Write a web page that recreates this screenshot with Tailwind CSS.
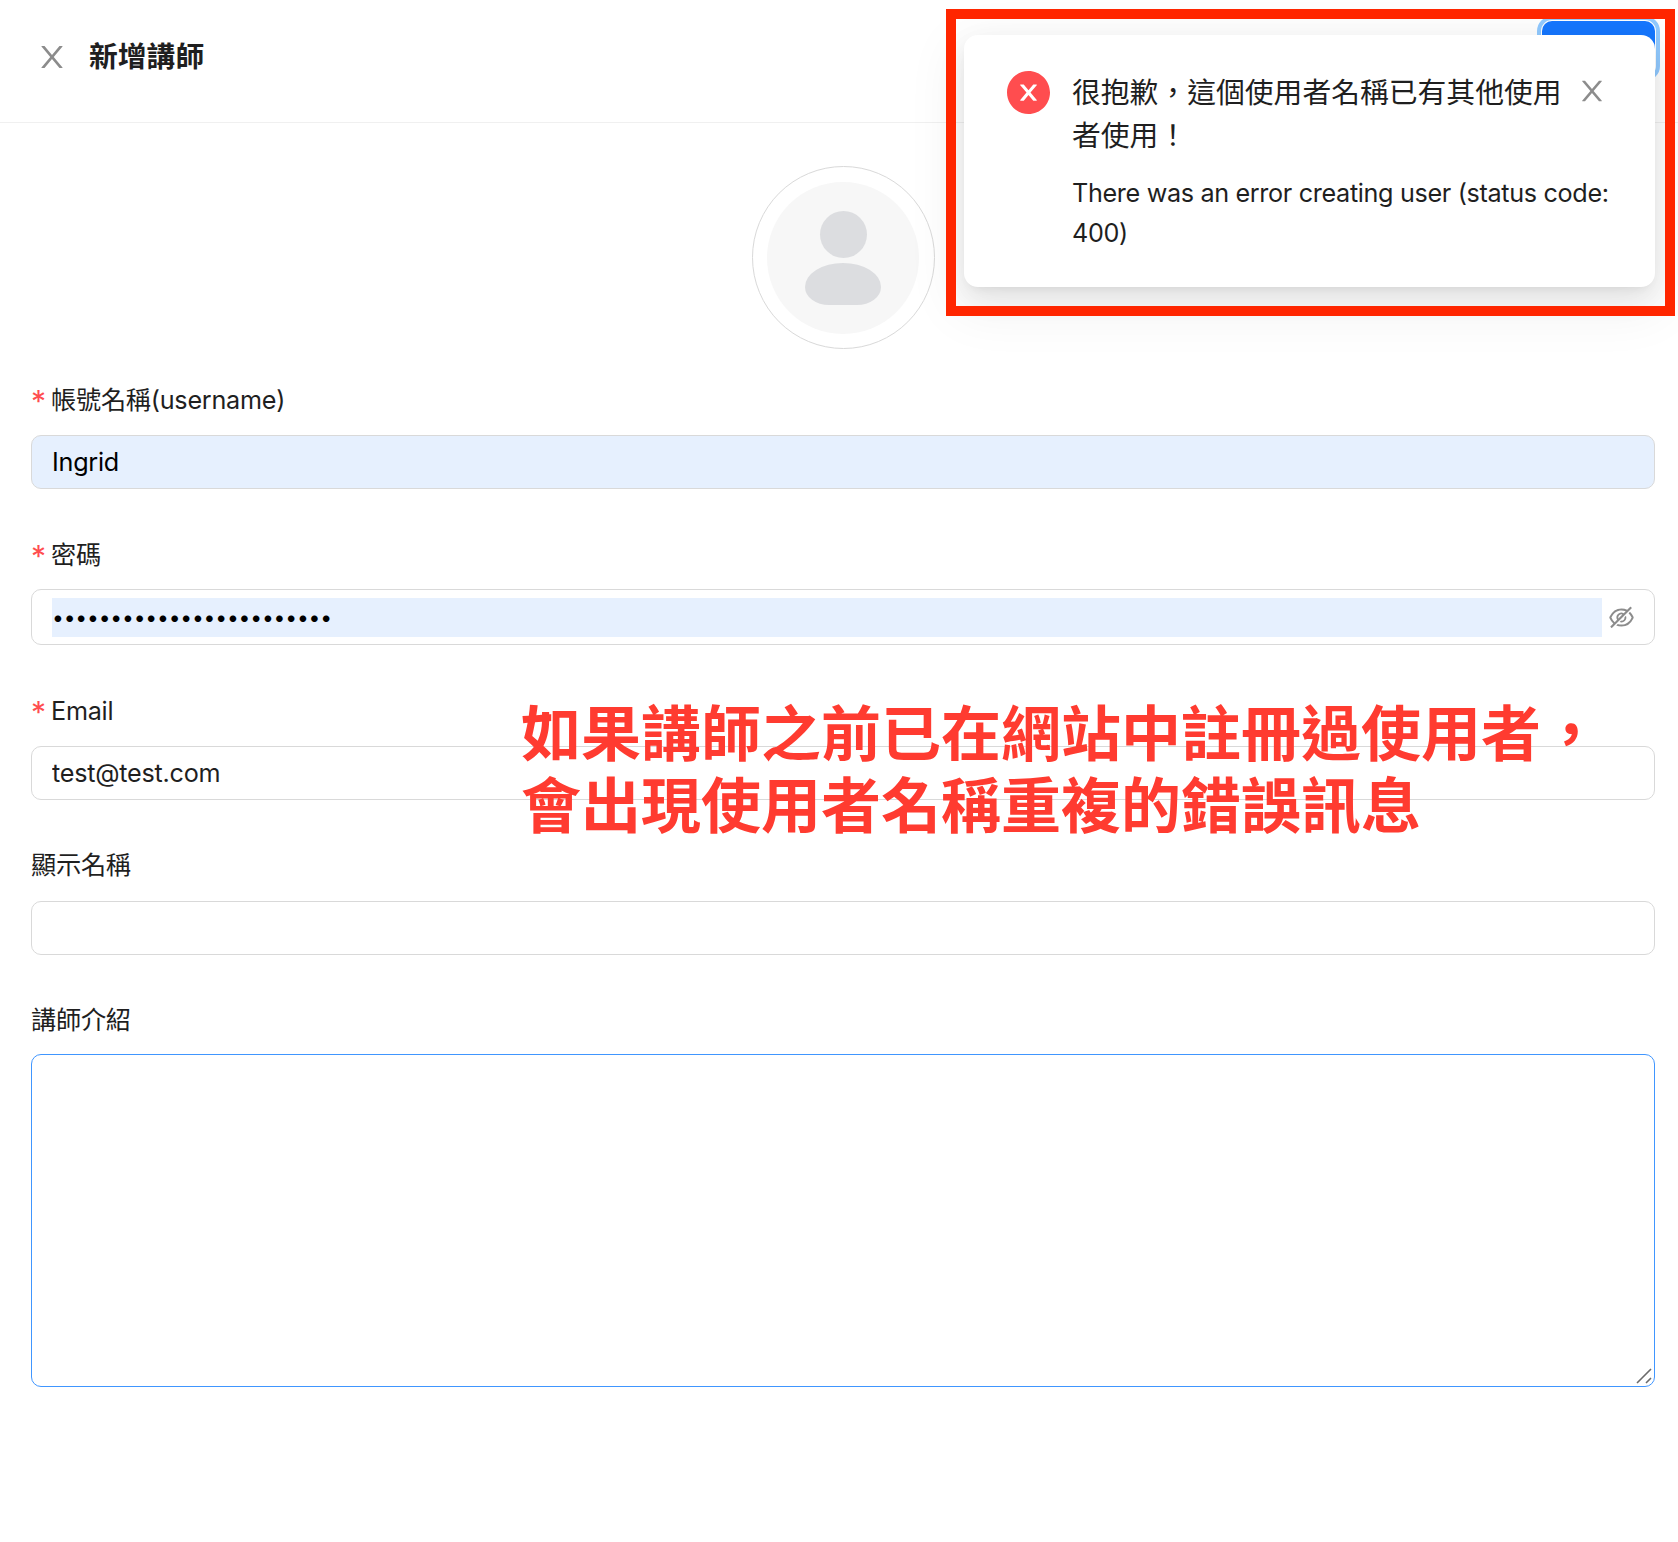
<!DOCTYPE html>
<html lang="zh-Hant">

<head>
    <meta charset="UTF-8">
    <meta name="viewport" content="width=device-width, initial-scale=1.0">
    <title>新增講師</title>
    <script src="https://cdn.jsdelivr.net/npm/@tailwindcss/browser@4"></script>
</head>

<body class="bg-white min-h-screen relative overflow-hidden font-['Inter','Noto_Sans_CJK_TC',sans-serif] text-[25.2px] tracking-[-0.25px] text-[#1f1f1f]">
    <!-- Header -->
    <header class="h-[123px] border-b border-[#f0f0f0] pl-[37px] pr-[23px] flex items-start justify-between">
        <div class="flex items-center mt-[34px] h-[45px]">
            <svg class="w-[30px] h-[30px] fill-[#8c8c8c]" viewBox="64 64 896 896">
                <path d="M563.8 512l262.5-312.9c4.4-5.2.7-13.1-6.1-13.1h-79.8c-4.7 0-9.2 2.1-12.3 5.7L511.6 449.8 295.1 191.7c-3-3.6-7.5-5.7-12.3-5.7H203c-6.8 0-10.5 7.9-6.1 13.1L459.4 512 196.9 824.9A7.95 7.95 0 0 0 203 838h79.8c4.7 0 9.2-2.1 12.3-5.7l216.5-258.1 216.5 258.1c3 3.6 7.5 5.7 12.3 5.7h79.8c6.8 0 10.5-7.9 6.1-13.1L563.8 512z" />
            </svg>
            <h1 class="ml-[22px] text-[28.8px] tracking-normal font-bold">新增講師</h1>
        </div>
        <!-- Save button, mostly hidden by the toast -->
        <button class="mt-[21px] w-[113px] h-[55px] bg-[#1677ff] rounded-[10px] outline-[4px] outline-offset-1 outline-[#91caff]"></button>
    </header>

    <main class="pl-[31px] pr-[23px]">
        <!-- Avatar -->
        <div class="flex justify-center mt-[43px]">
            <div class="w-[183px] h-[183px] rounded-full border border-[#d9d9d9] flex items-center justify-center">
                <div class="w-[152px] h-[152px] rounded-full bg-[#f7f7f7] flex flex-col items-center pt-[29px]">
                    <div class="w-[47px] h-[47px] rounded-full bg-[#dcdde0]"></div>
                    <div class="mt-[5px] w-[76px] h-[42px] rounded-[38px_38px_24px_24px/24px_24px_18px_18px] bg-[#dcdde0]"></div>
                </div>
            </div>
        </div>

        <!-- Form -->
        <form class="mt-[32px]">
            <label class="flex items-center h-[40px]"><span class="w-[20px] text-[30px] leading-none text-[#ff4d4f] mt-[-1px]">*</span>帳號名稱(username)</label>
            <input type="text" value="Ingrid"
                class="mt-[14px] block w-full h-[54px] px-[20px] bg-[#e6f0fe] text-black border border-[#d9d9d9] rounded-[10px] outline-none">

            <label class="mt-[47px] flex items-center h-[40px]"><span class="w-[20px] text-[30px] leading-none text-[#ff4d4f] mt-[-1px]">*</span>密碼</label>
            <div class="mt-[13px] h-[56px] px-[20px] flex items-center border border-[#d9d9d9] rounded-[10px]">
                <input type="password" value="aaaaaaaaaaaaaaaaaaaaaaaa"
                    class="flex-1 h-[39px] bg-[#e6f0fe] text-black text-[21px] tracking-[-0.15px] outline-none">
                <svg class="ml-[7px] w-[25px] h-[25px] fill-[#8c8c8c]" viewBox="64 64 896 896">
                    <path d="M942.2 486.2Q889.47 375.11 816.7 305l-50.88 50.88C807.31 395.53 843.45 447.4 874.7 512 791.5 684.2 673.4 766 512 766q-72.67 0-133.87-22.38L323 798.75Q408 838 512 838q288.3 0 430.2-300.3a60.29 60.29 0 0 0 0-51.5zm-63.57-320.64L836 122.88a8 8 0 0 0-11.32 0L715.31 232.2Q624.86 186 512 186q-288.3 0-430.2 300.3a60.3 60.3 0 0 0 0 51.5q56.69 119.4 136.5 191.41L112.48 835a8 8 0 0 0 0 11.31L155.17 889a8 8 0 0 0 11.31 0l712.15-712.12a8 8 0 0 0 0-11.32zM149.3 512C232.6 339.8 350.7 258 512 258c54.54 0 104.13 9.36 149.12 28.39l-70.3 70.3a176 176 0 0 0-238.13 238.13l-83.42 83.42C223.1 637.49 183.3 582.28 149.3 512zm246.7 0a112.11 112.11 0 0 1 146.2-106.69L401.31 546.2A112 112 0 0 1 396 512z" />
                    <path d="M508 624c-3.46 0-6.87-.16-10.25-.47l-52.82 52.82a176.09 176.09 0 0 0 227.42-227.42l-52.82 52.82c.31 3.38.47 6.79.47 10.25a111.94 111.94 0 0 1-112 112z" />
                </svg>
            </div>

            <label class="mt-[47px] flex items-center h-[40px]"><span class="w-[20px] text-[30px] leading-none text-[#ff4d4f] mt-[-1px]">*</span>Email</label>
            <input type="text" value="test@test.com"
                class="mt-[14px] block w-full h-[54px] px-[20px] border border-[#d9d9d9] rounded-[10px] outline-none">

            <label class="mt-[46px] flex items-center h-[40px]">顯示名稱</label>
            <input type="text"
                class="mt-[15px] block w-full h-[54px] px-[20px] border border-[#d9d9d9] rounded-[10px] outline-none">

            <label class="mt-[46px] flex items-center h-[40px]">講師介紹</label>
            <div class="relative mt-[13px]">
                <textarea class="block w-full h-[333px] px-[20px] py-[8px] border border-[#4096ff] rounded-[10px] outline-none resize-none"></textarea>
                <svg class="absolute right-[3px] bottom-[3px] w-[16px] h-[16px] stroke-[#6b6b6b] stroke-[1.6]" viewBox="0 0 16 16">
                    <path d="M1 15L15 1M10 15L15 10" />
                </svg>
            </div>
        </form>
    </main>

    <!-- Error toast -->
    <div class="absolute left-[964px] top-[35px] w-[691px] h-[252px] bg-white rounded-[14px] pl-[43px] pr-[41px] pt-[36px] flex shadow-[0_11px_29px_rgba(0,0,0,0.08),0_5px_11px_-7px_rgba(0,0,0,0.12),0_16px_50px_14px_rgba(0,0,0,0.05)]">
        <svg class="w-[43px] h-[43px] shrink-0 fill-[#ff4d4f]" viewBox="64 64 896 896">
            <path d="M512 64C264.6 64 64 264.6 64 512s200.6 448 448 448 448-200.6 448-448S759.4 64 512 64zm165.4 618.2l-66-.3L512 563.4l-99.3 118.4-66.1.3c-4.4 0-8-3.5-8-8 0-1.9.7-3.7 1.9-5.2l130.1-155L340.5 359a8.32 8.32 0 0 1-1.9-5.2c0-4.4 3.6-8 8-8l66.1.3L512 464.6l99.3-118.4 66-.3c4.4 0 8 3.5 8 8 0 1.9-.7 3.7-1.9 5.2L553.5 514l130 155c1.2 1.5 1.9 3.3 1.9 5.2 0 4.4-3.6 8-8 8z" />
        </svg>
        <div class="ml-[22px] flex-1">
            <p class="w-[495px] text-[28.8px] tracking-normal leading-[43px]">很抱歉&#xFF0C;這個使用者名稱已有其他使用者使用&#xFF01;</p>
            <p class="mt-[16px] text-[25.2px] tracking-[-0.34px] leading-[40px]">There was an error creating user (status code: 400)</p>
        </div>
        <svg class="absolute left-[614px] top-[42px] w-[28px] h-[28px] fill-[#8c8c8c]" viewBox="64 64 896 896">
            <path d="M563.8 512l262.5-312.9c4.4-5.2.7-13.1-6.1-13.1h-79.8c-4.7 0-9.2 2.1-12.3 5.7L511.6 449.8 295.1 191.7c-3-3.6-7.5-5.7-12.3-5.7H203c-6.8 0-10.5 7.9-6.1 13.1L459.4 512 196.9 824.9A7.95 7.95 0 0 0 203 838h79.8c4.7 0 9.2-2.1 12.3-5.7l216.5-258.1 216.5 258.1c3 3.6 7.5 5.7 12.3 5.7h79.8c6.8 0 10.5-7.9 6.1-13.1L563.8 512z" />
        </svg>
    </div>

    <!-- Red annotation box over the toast -->
    <div class="absolute left-[946px] top-[9px] w-[729px] h-[307px] border-[10px] border-[#ff2600]"></div>

    <!-- Red annotation text -->
    <p class="absolute left-[521px] top-[698px] text-[60px] tracking-normal leading-[72px] font-bold text-[#ff3b30] whitespace-nowrap">如果講師之前已在網站中註冊過使用者&#xFF0C;<br>會出現使用者名稱重複的錯誤訊息</p>
</body>

</html>
